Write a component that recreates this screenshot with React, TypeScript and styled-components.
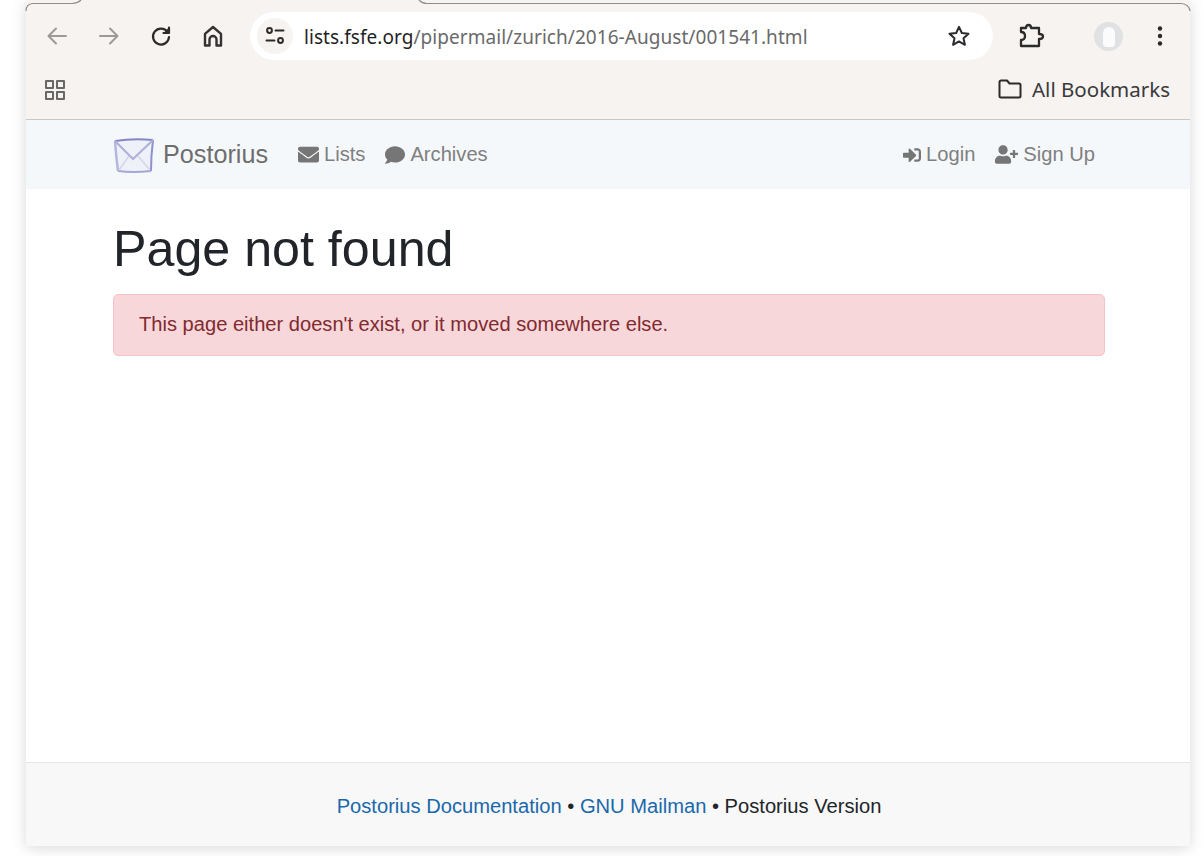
import React from 'react'
import styled, { createGlobalStyle } from 'styled-components'
import { FaEnvelope, FaComment, FaSignInAlt, FaUserPlus } from 'react-icons/fa'

const GlobalStyle = createGlobalStyle`
  html, body {
    margin: 0;
    padding: 0;
    background: #fff;
    overflow: hidden;
  }
  body {
    font-family: "Liberation Sans", Arial, sans-serif;
  }
`

const Page = styled.div`
  width: 1204px;
  height: 856px;
  padding-left: 26px;
  box-sizing: border-box;
  overflow: hidden;
`

const Browser = styled.div`
  position: relative;
  width: 1164px;
  height: 846px;
  display: flex;
  flex-direction: column;
  background: #fff;
  box-shadow: 0 2px 14px rgba(0, 0, 0, 0.15);
`

const TabEdge = styled.svg`
  position: absolute;
  left: -1px;
  top: 0;
`

const Chrome = styled.div`
  height: 119px;
  background: #f6f3f0;
  border-bottom: 1px solid #c9c6c3;
  display: flex;
  flex-direction: column;
  flex-shrink: 0;
`

const Toolbar = styled.div`
  height: 48px;
  margin-top: 12px;
  display: flex;
  align-items: center;
  padding-left: 14px;
`

const ToolButton = styled.div<{ $gap?: number }>`
  width: 34px;
  height: 34px;
  margin-right: ${p => p.$gap ?? 18}px;
  display: flex;
  align-items: center;
  justify-content: center;
  flex-shrink: 0;
`

const Omnibox = styled.div`
  width: 743px;
  height: 48px;
  margin-left: -1px;
  margin-right: 21px;
  border-radius: 24px;
  background: #fff;
  display: flex;
  align-items: center;
  padding: 0 22px 0 7px;
  box-sizing: border-box;
  flex-shrink: 0;
`

const SiteChip = styled.div`
  width: 36px;
  height: 36px;
  border-radius: 50%;
  background: #f6f3f0;
  display: flex;
  align-items: center;
  justify-content: center;
  flex-shrink: 0;
`

const Url = styled.div`
  flex: 1;
  margin-left: 11px;
  padding-top: 2px;
  font-family: "Noto Sans", sans-serif;
  font-size: 19px;
  letter-spacing: 0.05px;
  color: #6a6a6a;
  white-space: nowrap;
  strong {
    font-weight: 400;
    color: #1f1f1f;
  }
`

const Avatar = styled.div`
  position: relative;
  width: 29px;
  height: 29px;
  border-radius: 50%;
  background: #dfe1e3;
  overflow: hidden;
  &::after {
    content: '';
    position: absolute;
    left: 9px;
    top: 5px;
    width: 12px;
    height: 20px;
    border-radius: 7px 7px 4px 4px;
    background: #fbfbfb;
  }
`

const BookmarksBar = styled.div`
  flex: 1;
  display: flex;
  align-items: center;
  justify-content: space-between;
  padding: 0 20px 0 17px;
`

const BookmarkFolder = styled.div`
  display: flex;
  align-items: center;
  gap: 10px;
  padding-bottom: 2px;
  font-family: "Noto Sans", sans-serif;
  font-size: 20.5px;
  color: #3a3a3a;
`

const Navbar = styled.nav`
  height: 69px;
  background: #f5f8fb;
  display: flex;
  align-items: center;
  padding: 0 95px 0 87px;
  flex-shrink: 0;
`

const Logo = styled.svg`
  margin-right: 8px;
  flex-shrink: 0;
`

const Brand = styled.a`
  font-size: 25.2px;
  color: #6e6e6e;
  margin-right: 30px;
`

const NavGroup = styled.div<{ $right?: boolean }>`
  display: flex;
  align-items: center;
  gap: 20px;
  margin-left: ${p => (p.$right ? 'auto' : '0')};
`

const NavLink = styled.a`
  display: flex;
  align-items: center;
  gap: 5px;
  font-size: 20.15px;
  color: #7f7f7f;
  svg {
    color: #767676;
  }
`

const Main = styled.main`
  flex: 1;
  padding: 0 85px 0 87px;
`

const Title = styled.h1`
  margin: 31px 0 16px;
  font-size: 50.2px;
  line-height: 58px;
  font-weight: 400;
  color: #212529;
`

const Alert = styled.div`
  height: 62px;
  box-sizing: border-box;
  padding: 0 25px 2px;
  display: flex;
  align-items: center;
  font-size: 20.12px;
  color: #812a2f;
  background: #f8d7da;
  border: 1px solid #f5c2c7;
  border-radius: 5px;
`

const Footer = styled.footer`
  height: 84px;
  box-sizing: border-box;
  background: #f8f8f8;
  border-top: 1px solid #e6e6e6;
  display: flex;
  align-items: center;
  justify-content: center;
  padding: 3px 0 0 2px;
  font-size: 20.15px;
  color: #212529;
  white-space: pre;
  a {
    color: #1a68ab;
  }
`

const Stroke = styled.svg.attrs<{ fill?: string }>(p => ({
  fill: p.fill ?? 'none',
  strokeLinecap: 'round',
  strokeLinejoin: 'round',
}))``

export default function App() {
  return (
    <Page>
      <GlobalStyle />
      <Browser>
        <TabEdge width="1166" height="12" viewBox="0 0 1166 12" fill="none" stroke="#8f8d8b" strokeWidth="1.2">
          <path d="M1 11 Q1 4 8 3.5 H47 Q53 3 56 0" />
          <path d="M394 0 Q397 3.5 402 3.5 H1156 Q1164 4 1165 11" />
        </TabEdge>
        <Chrome>
          <Toolbar>
            <ToolButton>
              <Stroke width="24" height="24" viewBox="0 0 24 24" stroke="#9a9a9a" strokeWidth="2">
                <path d="M21 12H4M11 4.5 3.5 12l7.5 7.5" />
              </Stroke>
            </ToolButton>
            <ToolButton>
              <Stroke width="24" height="24" viewBox="0 0 24 24" stroke="#9a9a9a" strokeWidth="2">
                <path d="M3 12h17M13 4.5l7.5 7.5-7.5 7.5" />
              </Stroke>
            </ToolButton>
            <ToolButton>
              <Stroke width="24" height="24" viewBox="0 0 24 24" stroke="#2b2b2b" strokeWidth="2.2">
                <path d="M18.600 8A8 8 0 1 0 20 13" />
                <path d="M20 3.500V9h-5.500" fill="#2b2b2b" />
              </Stroke>
            </ToolButton>
            <ToolButton $gap={21}>
              <Stroke width="24" height="24" viewBox="0 0 24 24" stroke="#333" strokeWidth="2.4">
                <path d="M4 21.500V9.800L12 3l8 6.800V21.500h-4.500v-6a3.500 3.500 0 0 0-7 0v6Z" />
              </Stroke>
            </ToolButton>
            <Omnibox>
              <SiteChip>
                <Stroke width="22" height="22" viewBox="0 0 22 22" stroke="#2b2b2b" strokeWidth="2">
                  <circle cx="5.500" cy="5.500" r="2.400" />
                  <path d="M11.500 5.500h8M2.500 15.500h8" />
                  <circle cx="16.500" cy="15.500" r="2.400" />
                </Stroke>
              </SiteChip>
              <Url><strong>lists.fsfe.org</strong>/pipermail/zurich/2016-August/001541.html</Url>
              <Stroke width="24" height="24" viewBox="0 0 24 24" stroke="#2b2b2b" strokeWidth="2">
                <path d="m12 2.800 2.800 6.200 6.700.7-5 4.500 1.400 6.600-5.900-3.400-5.900 3.400 1.400-6.600-5-4.500 6.700-.7Z" />
              </Stroke>
            </Omnibox>
            <ToolButton $gap={43}>
              <Stroke width="28" height="28" viewBox="0 0 28 28" stroke="#2b2b2b" strokeWidth="2.300">
                <path d="M4 6H9Q9 3 11.500 3Q14 3 14 6H22V12Q26 12 26 14.500Q26 17 22 17V24H4V18Q8 18 8 14Q8 10 4 10Z" />
              </Stroke>
            </ToolButton>
            <ToolButton $gap={32}>
              <Avatar />
            </ToolButton>
            <Stroke width="6" height="24" viewBox="0 0 6 24" fill="#2b2b2b">
              <circle cx="3" cy="4.500" r="2.200" />
              <circle cx="3" cy="12" r="2.200" />
              <circle cx="3" cy="19.500" r="2.200" />
            </Stroke>
          </Toolbar>
          <BookmarksBar>
            <Stroke width="24" height="24" viewBox="0 0 24 24" stroke="#686868" strokeWidth="2" strokeLinecap="butt">
              <rect x="3" y="3" width="7" height="7" />
              <rect x="14" y="3" width="7" height="7" />
              <rect x="3" y="14" width="7" height="7" />
              <rect x="14" y="14" width="7" height="7" />
            </Stroke>
            <BookmarkFolder>
              <Stroke width="24" height="20" viewBox="0 0 24 20" stroke="#2b2b2b" strokeWidth="2">
                <path d="M1.500 3a1.500 1.500 0 0 1 1.500-1.500h6l2.500 3H21A1.500 1.500 0 0 1 22.500 6v11a1.500 1.500 0 0 1-1.500 1.500H3A1.500 1.500 0 0 1 1.500 17Z" />
              </Stroke>
              All Bookmarks
            </BookmarkFolder>
          </BookmarksBar>
        </Chrome>
        <Navbar>
          <Logo width="42" height="38" viewBox="0 0 42 38" fill="none">
            <defs>
              <filter id="logo-soft">
                <feGaussianBlur stdDeviation="0.5" />
              </filter>
            </defs>
            <g filter="url(#logo-soft)">
              <path d="M2 5 Q20 2 40 4 Q38 20 38 35 Q20 37 5 35 Q3 20 2 5Z" fill="#eef1f8" />
              <path d="M2 5 Q20 2 40 4" stroke="#8486c4" strokeWidth="2" />
              <path d="M40 4 Q38 20 38 35" stroke="#8f91cb" strokeWidth="2" />
              <path d="M2 5 Q3 20 5 35" stroke="#b4b6de" strokeWidth="2.500" />
              <path d="M5 35 Q20 37 38 35" stroke="#a5a7d6" strokeWidth="2" />
              <path d="M2 5 L20 23 L40 4" stroke="#aeb0da" strokeWidth="2" />
              <path d="M6 34 L16 20M37 34 L25 20" stroke="#d4d6ea" strokeWidth="1.500" />
            </g>
          </Logo>
          <Brand>Postorius</Brand>
          <NavGroup>
            <NavLink><FaEnvelope size={21} /> Lists</NavLink>
            <NavLink><FaComment size={20} /> Archives</NavLink>
          </NavGroup>
          <NavGroup $right>
            <NavLink><FaSignInAlt size={18} /> Login</NavLink>
            <NavLink><FaUserPlus size={23} /> Sign Up</NavLink>
          </NavGroup>
        </Navbar>
        <Main>
          <Title>Page not found</Title>
          <Alert>This page either doesn't exist, or it moved somewhere else.</Alert>
        </Main>
        <Footer>
          <a>Postorius Documentation</a> • <a>GNU Mailman</a> • Postorius Version
        </Footer>
      </Browser>
    </Page>
  )
}
